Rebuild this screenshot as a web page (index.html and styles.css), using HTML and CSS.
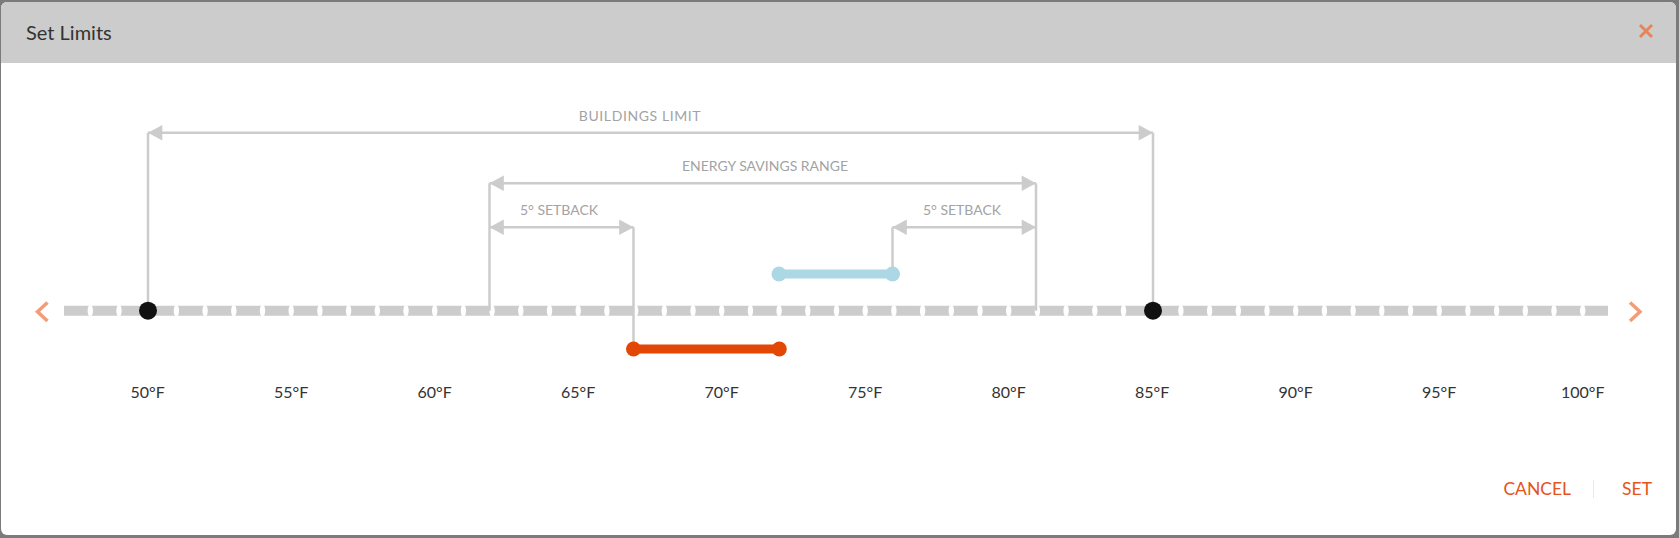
FILE: index.html
```html
<!DOCTYPE html>
<html lang="en">
<head>
    <meta charset="UTF-8">
    <meta name="viewport" content="width=device-width, initial-scale=1.0">
    <title>Set Limits</title>
    <link rel="stylesheet" href="styles.css">
</head>
<body>
    <div class="modal">
        <div class="modal-header">
            <h2 class="modal-title">Set Limits</h2>
            <button class="close-btn" aria-label="Close">
                <svg width="16" height="16" viewBox="0 0 16 16">
                    <path d="M2 2 L14 14 M14 2 L2 14" stroke="#e8845a" stroke-width="3" />
                </svg>
            </button>
        </div>

        <!-- chart uses page coordinates through the viewBox -->
        <svg class="chart" width="1675" height="360" viewBox="1 62 1675 360">
            <!-- left / right chevrons -->
            <polyline class="chevron" points="47.5,302.5 37.5,311.7 47.5,321" />
            <polyline class="chevron" points="1630,302.5 1640,311.7 1630,321" />

            <!-- dashed scale -->
            <line x1="64" y1="310.7" x2="1608" y2="310.7" stroke="#cccccc" stroke-width="10" />
            <g id="ticks" fill="#ffffff"></g>

            <!-- dimension lines -->
            <g class="dim">
                <line x1="148" y1="132.7" x2="148" y2="310.7" />
                <line x1="1153" y1="132.7" x2="1153" y2="310.7" />
                <line x1="148" y1="132.7" x2="1153" y2="132.7" />

                <line x1="489.5" y1="183.3" x2="489.5" y2="310.7" />
                <line x1="1036" y1="183.3" x2="1036" y2="310.7" />
                <line x1="489.5" y1="183.3" x2="1036" y2="183.3" />

                <line x1="633.5" y1="227.3" x2="633.5" y2="349" />
                <line x1="489.5" y1="227.3" x2="633.5" y2="227.3" />

                <line x1="892.5" y1="227.3" x2="892.5" y2="274" />
                <line x1="892.5" y1="227.3" x2="1036" y2="227.3" />
            </g>
            <g fill="#cccccc">
                <polygon points="148,132.7 162.3,125 162.3,140.4" />
                <polygon points="1153,132.7 1138.7,125 1138.7,140.4" />
                <polygon points="489.5,183.3 503.8,175.6 503.8,191" />
                <polygon points="1036,183.3 1021.7,175.6 1021.7,191" />
                <polygon points="489.5,227.3 503.8,219.6 503.8,235" />
                <polygon points="633.5,227.3 619.2,219.6 619.2,235" />
                <polygon points="892.5,227.3 906.8,219.6 906.8,235" />
                <polygon points="1036,227.3 1021.7,219.6 1021.7,235" />
            </g>

            <text class="dim-label wide" x="640" y="120.5">BUILDINGS LIMIT</text>
            <text class="dim-label" x="765" y="171">ENERGY SAVINGS RANGE</text>
            <text class="dim-label" x="559" y="215">5° SETBACK</text>
            <text class="dim-label" x="962" y="215">5° SETBACK</text>

            <!-- heat / cool bars -->
            <line x1="779" y1="274" x2="892.5" y2="274" stroke="#acd8e5" stroke-width="9" />
            <circle cx="779" cy="274" r="7.5" fill="#acd8e5" />
            <circle cx="892.5" cy="274" r="7.5" fill="#acd8e5" />

            <line x1="633.5" y1="349" x2="779.3" y2="349" stroke="#e24705" stroke-width="9" />
            <circle cx="633.5" cy="349" r="7.5" fill="#e24705" />
            <circle cx="779.3" cy="349" r="7.5" fill="#e24705" />

            <!-- building limit handles -->
            <circle cx="148" cy="310.7" r="9" fill="#111111" />
            <circle cx="1153" cy="310.7" r="9" fill="#111111" />

            <g id="labels"></g>
        </svg>

        <div class="modal-footer">
            <button class="link-btn">CANCEL</button>
            <span class="divider"></span>
            <button class="link-btn">SET</button>
        </div>
    </div>

    <script>
        const SVG_NS = "http://www.w3.org/2000/svg";
        const startX = 147.7;
        const perDegree = 28.7;

        function xOf(temp) {
            return startX + (temp - 50) * perDegree;
        }

        const ticks = document.getElementById("ticks");
        for (let t = 48; t <= 100; t++) {
            const tick = document.createElementNS(SVG_NS, "ellipse");
            tick.setAttribute("cx", xOf(t));
            tick.setAttribute("cy", 310.7);
            tick.setAttribute("rx", 2.7);
            tick.setAttribute("ry", 6);
            ticks.appendChild(tick);
        }

        const labels = document.getElementById("labels");
        for (let t = 50; t <= 100; t += 5) {
            const label = document.createElementNS(SVG_NS, "text");
            label.setAttribute("class", "scale-label");
            label.setAttribute("x", xOf(t));
            label.setAttribute("y", 398.3);
            label.textContent = t + "°F";
            labels.appendChild(label);
        }
    </script>
</body>
</html>
```

FILE: styles.css
```css
html, body {
    margin: 0;
    padding: 0;
    height: 100%;
}
body {
    font-family: Lato, "Open Sans", Arial, sans-serif;
    background-color: #7b7b7b;
    overflow: hidden;
}
.modal {
    margin: 2px 3px 0 1px;
    height: 533px;
    background-color: #ffffff;
    border-radius: 6px;
    overflow: hidden;
    display: flex;
    flex-direction: column;
}
.modal-header {
    height: 61px;
    background-color: #cccccc;
    display: flex;
    align-items: center;
    justify-content: space-between;
    padding: 0 22px 0 25px;
    flex-shrink: 0;
}
.modal-title {
    margin: 0;
    font-size: 20px;
    font-weight: 400;
    color: #333333;
    line-height: 1;
    padding-bottom: 2px;
}
.close-btn {
    background: none;
    border: none;
    padding: 0;
    cursor: pointer;
    display: flex;
    margin-top: -3px;
}
.chart {
    display: block;
    flex-shrink: 0;
    margin-top: -1px;
}
.chevron {
    fill: none;
    stroke: #f29d78;
    stroke-width: 3.5;
}
.dim line {
    stroke: #cccccc;
    stroke-width: 2.5;
}
.dim-label {
    font-family: Lato, sans-serif;
    font-size: 14px;
    fill: #a3a3a3;
    text-anchor: middle;
}
.dim-label.wide {
    letter-spacing: 0.6px;
}
.scale-label {
    font-family: Lato, sans-serif;
    font-size: 16px;
    fill: #333333;
    text-anchor: middle;
}
.modal-footer {
    margin-top: auto;
    display: flex;
    justify-content: flex-end;
    align-items: center;
    padding: 0 24px 35px 0;
}
.link-btn {
    background: none;
    border: none;
    padding: 0;
    font-family: Lato, sans-serif;
    font-size: 17.5px;
    line-height: 22px;
    color: #e5541c;
    cursor: pointer;
}
.divider {
    width: 1px;
    height: 18px;
    background-color: #e8e8e8;
    margin: 0 28px 0 22px;
}
```
